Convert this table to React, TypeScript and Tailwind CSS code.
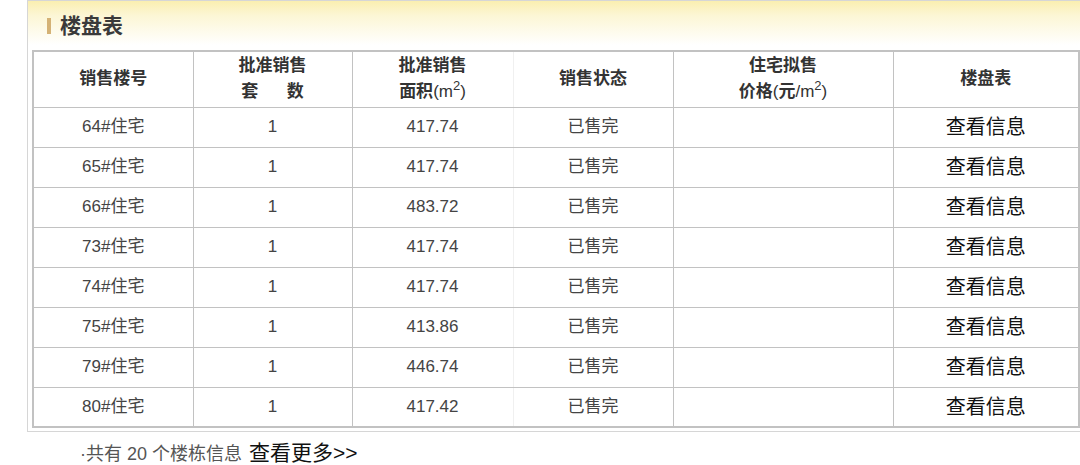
import React from "react";

const rows = [
  ["64#住宅", "1", "417.74", "已售完"],
  ["65#住宅", "1", "417.74", "已售完"],
  ["66#住宅", "1", "483.72", "已售完"],
  ["73#住宅", "1", "417.74", "已售完"],
  ["74#住宅", "1", "417.74", "已售完"],
  ["75#住宅", "1", "413.86", "已售完"],
  ["79#住宅", "1", "446.74", "已售完"],
  ["80#住宅", "1", "417.42", "已售完"],
];

const font = { fontFamily: '"Liberation Sans", "Noto Sans CJK SC", sans-serif' };

function Sup() {
  return <span className="relative top-[-7px] text-[13px] font-normal">2</span>;
}

export default function App() {
  return (
    <div className="w-[1080px] h-[465px] bg-white overflow-hidden" style={font}>
      <div className="ml-[27px] w-[1060px] border border-[#d6d6d6] bg-[linear-gradient(to_bottom,#faefb0_0px,#fcf6d4_14px,#ffffff_44px)] pl-[4px] pb-[3px]">
        <div className="h-[49px] flex items-center pl-[15px]">
          <div className="w-[4px] h-[16px] bg-[#d4b276] mr-[9px] mt-[1px]" />
          <div className="text-[21px] font-bold text-[#3a3a3a] leading-none">楼盘表</div>
        </div>
        <table className="table-fixed border-collapse w-[1046px] border-2 border-[#c2c2c2] bg-white">
          <colgroup>
            <col className="w-[160px]" />
            <col className="w-[159px]" />
            <col className="w-[161px]" />
            <col className="w-[160px]" />
            <col className="w-[220px]" />
            <col className="w-[186px]" />
          </colgroup>
          <thead>
            <tr className="h-[56px] text-[17px] font-semibold text-[#333] leading-[26px]">
              <th className="border border-[#c2c2c2] font-semibold">销售楼号</th>
              <th className="border border-[#c2c2c2] font-semibold">
                批准销售
                <br />
                <span className="whitespace-pre">套      数</span>
              </th>
              <th className="border border-y-[#c2c2c2] border-l-[#c2c2c2] border-r-[#f0f0f0] font-semibold">
                批准销售
                <br />
                面积<span className="font-normal">(m<Sup />)</span>
              </th>
              <th className="border border-[#c2c2c2] border-l-[#f0f0f0] font-semibold">销售状态</th>
              <th className="border border-[#c2c2c2] font-semibold">
                住宅拟售
                <br />
                价格<span className="font-normal">(</span>元<span className="font-normal">/m<Sup />)</span>
              </th>
              <th className="border border-[#c2c2c2] font-semibold">楼盘表</th>
            </tr>
          </thead>
          <tbody>
            {rows.map((r) => (
              <tr key={r[0]} className="h-[40px] text-[17px] text-[#444] text-center">
                <td className="border border-[#c2c2c2]">{r[0]}</td>
                <td className="border border-[#c2c2c2]">{r[1]}</td>
                <td className="border border-y-[#c2c2c2] border-l-[#c2c2c2] border-r-[#f0f0f0]">{r[2]}</td>
                <td className="border border-[#c2c2c2] border-l-[#f0f0f0]">{r[3]}</td>
                <td className="border border-[#c2c2c2]"></td>
                <td className="border border-[#c2c2c2] text-[20px] text-[#111]">查看信息</td>
              </tr>
            ))}
          </tbody>
        </table>
      </div>
      <div className="pl-[80px] pt-[5px] flex items-baseline">
        <span className="text-[18px] text-[#555]">·共有 20 个楼栋信息</span>
        <span className="ml-[7px] text-[21px] text-[#111]">查看更多&gt;&gt;</span>
      </div>
    </div>
  );
}
